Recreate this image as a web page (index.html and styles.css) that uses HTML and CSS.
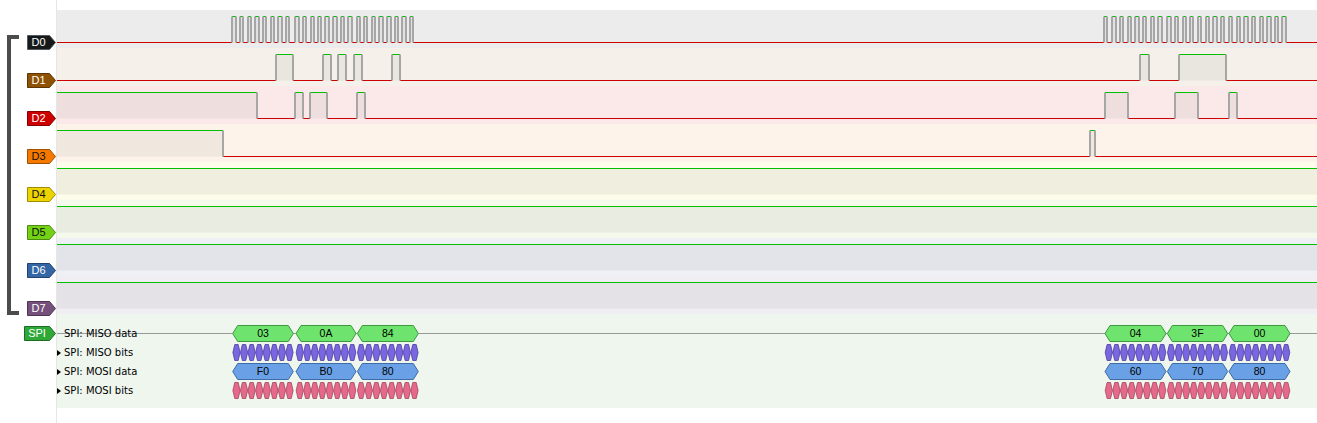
FILE: index.html
```html
<!DOCTYPE html>
<html>
<head>
<meta charset="utf-8">
<title>Logic analyzer</title>
<link rel="stylesheet" href="styles.css">
</head>
<body>
<div class="app">
  <div class="headers">
    <div class="bracket-col"><div class="bracket"></div></div>
    <div class="labels">
      <div class="hrow"><div class="tag"><svg width="29" height="15"><polygon points="0.5,0.5 22.5,0.5 28.5,7.5 22.5,14.5 0.5,14.5" fill="#16191a" stroke="#555a5c"/></svg><span class="lt">D0</span></div></div>
      <div class="hrow"><div class="tag"><svg width="29" height="15"><polygon points="0.5,0.5 22.5,0.5 28.5,7.5 22.5,14.5 0.5,14.5" fill="#8f5202" stroke="#5f3601"/></svg><span class="lt">D1</span></div></div>
      <div class="hrow"><div class="tag"><svg width="29" height="15"><polygon points="0.5,0.5 22.5,0.5 28.5,7.5 22.5,14.5 0.5,14.5" fill="#cc0000" stroke="#880000"/></svg><span class="lt">D2</span></div></div>
      <div class="hrow"><div class="tag"><svg width="29" height="15"><polygon points="0.5,0.5 22.5,0.5 28.5,7.5 22.5,14.5 0.5,14.5" fill="#f57900" stroke="#a35000"/></svg><span class="dk">D3</span></div></div>
      <div class="hrow"><div class="tag"><svg width="29" height="15"><polygon points="0.5,0.5 22.5,0.5 28.5,7.5 22.5,14.5 0.5,14.5" fill="#edd400" stroke="#9e8d00"/></svg><span class="dk">D4</span></div></div>
      <div class="hrow"><div class="tag"><svg width="29" height="15"><polygon points="0.5,0.5 22.5,0.5 28.5,7.5 22.5,14.5 0.5,14.5" fill="#73d216" stroke="#4d8c0f"/></svg><span class="dk">D5</span></div></div>
      <div class="hrow"><div class="tag"><svg width="29" height="15"><polygon points="0.5,0.5 22.5,0.5 28.5,7.5 22.5,14.5 0.5,14.5" fill="#3465a4" stroke="#22436d"/></svg><span class="lt">D6</span></div></div>
      <div class="hrow"><div class="tag"><svg width="29" height="15"><polygon points="0.5,0.5 22.5,0.5 28.5,7.5 22.5,14.5 0.5,14.5" fill="#75507b" stroke="#4e3552"/></svg><span class="lt">D7</span></div></div>
      <div class="hrow dec"><div class="tag wide"><svg width="32" height="15"><polygon points="0.5,0.5 25.5,0.5 31.5,7.5 25.5,14.5 0.5,14.5" fill="#2ea836" stroke="#1d6e22"/></svg><span class="lt">SPI</span></div></div>
    </div>
  </div>
  <div class="view">
    <div class="ruler"></div>
    <div class="trace t0"><svg class="wave" data-ch="d0" width="1260" height="38"></svg></div>
    <div class="trace t1"><svg class="wave" data-ch="d1" width="1260" height="38"></svg></div>
    <div class="trace t2"><svg class="wave" data-ch="d2" width="1260" height="38"></svg></div>
    <div class="trace t3"><svg class="wave" data-ch="d3" width="1260" height="38"></svg></div>
    <div class="trace t4"><svg class="wave" data-ch="d4" width="1260" height="38"></svg></div>
    <div class="trace t5"><svg class="wave" data-ch="d5" width="1260" height="38"></svg></div>
    <div class="trace t6"><svg class="wave" data-ch="d6" width="1260" height="38"></svg></div>
    <div class="trace t7"><svg class="wave" data-ch="d7" width="1260" height="38"></svg></div>
    <div class="decoder">
      <div class="drow"><svg class="ann" data-row="0" width="1260" height="19"></svg><div class="dtitle"><span class="tri hidden"></span>SPI: MISO data</div></div>
      <div class="drow"><svg class="ann" data-row="1" width="1260" height="19"></svg><div class="dtitle"><span class="tri"></span>SPI: MISO bits</div></div>
      <div class="drow"><svg class="ann" data-row="2" width="1260" height="19"></svg><div class="dtitle"><span class="tri"></span>SPI: MOSI data</div></div>
      <div class="drow"><svg class="ann" data-row="3" width="1260" height="19"></svg><div class="dtitle"><span class="tri"></span>SPI: MOSI bits</div></div>
    </div>
  </div>
</div>
<script src="script.js"></script>
</body>
</html>
```

FILE: styles.css
```css
* { box-sizing: border-box; }
body { margin: 0; background: #fff; font-family: "DejaVu Sans", "Noto Sans", sans-serif; }
.app { display: flex; width: 1317px; height: 423px; overflow: hidden; }

.headers { width: 57px; flex: none; display: flex; padding-top: 10px; border-right: 1px solid #e6e6e6; background: #fff; }
.bracket-col { width: 24px; flex: none; padding-left: 7px; }
.bracket { margin-top: 25px; width: 12px; height: 280px; border: 4px solid #4c4c4c; border-right: none; }
.labels { flex: 1; display: flex; flex-direction: column; }
.hrow { height: 38px; flex: none; }
.hrow .tag { margin-top: 25px; margin-left: 3px; }
.hrow.dec { height: auto; }
.hrow.dec .tag { margin-top: 12px; margin-left: 0; }
.tag { position: relative; width: 29px; height: 15px; display: flex; }
.tag.wide { width: 32px; }
.tag svg { position: absolute; left: 0; top: 0; display: block; }
.tag span { position: relative; width: 23px; text-align: center; font-family: "Liberation Sans", Arial, sans-serif; font-size: 11px; line-height: 15px; }
.tag.wide span { width: 26px; }
.tag .lt { color: #fff; }
.tag .dk { color: #111; }

.view { flex: 1; display: flex; flex-direction: column; }
.ruler { height: 10px; flex: none; background: #fff; }
.trace { height: 38px; flex: none; }
.trace svg { display: block; }
.t0 { background: #ececec; }
.t1 { background: #f5f1ea; }
.t2 { background: #fbe9e9; }
.t3 { background: #fdf3ea; }
.t4 { background: #fdfbea; }
.t5 { background: #f4f9ec; }
.t6 { background: #eef0f6; }
.t7 { background: #f1eef3; }

.decoder { flex: none; background: #eef6ee; padding: 10px 0 8px; }
.drow { position: relative; height: 19px; }
.drow svg { position: absolute; left: 0; top: 0; display: block; }
.dtitle { position: relative; display: flex; align-items: center; height: 19px; font-size: 10px; color: #000; white-space: nowrap; }
.tri { width: 0; height: 0; border-left: 4px solid #000; border-top: 3.5px solid transparent; border-bottom: 3.5px solid transparent; margin-right: 3px; }
.tri.hidden { visibility: hidden; }
.ann text { font-family: "Liberation Sans", Arial, sans-serif; font-size: 10.5px; fill: #000; }
```

FILE: script.js
```js
(function () {
  var NS = 'http://www.w3.org/2000/svg';
  var X0 = 57, W = 1260, HI = 6.5, LO = 32.5;

  function el(tag, attrs, parent) {
    var e = document.createElementNS(NS, tag);
    for (var k in attrs) e.setAttribute(k, attrs[k]);
    if (parent) parent.appendChild(e);
    return e;
  }

  var g1 = [232.3,240,248,255.3,263,270.7,278.3,286,295.3,303,310.7,318,325.3,333.3,340.7,348.3,356.7,364,372,379.3,387.3,394.7,402.3,410];
  var g2 = [1104,1112.3,1120,1127.7,1135.3,1143,1150.7,1158.3,1167.3,1175,1182.7,1190,1198,1205.7,1213.3,1221,1229,1236.7,1244.3,1252,1259.7,1267.3,1275,1282.3];
  var clk = g1.concat(g2).map(function (e) { return [e, e + 3.4]; });
  var full = [[57, 1317]];
  var traces = {
    d0: clk,
    d1: [[276.3,292.7],[322.7,330.7],[338.3,346],[354.3,362.3],[392.3,400.3],[1140.3,1148.7],[1179.3,1226.3]],
    d2: [[57,256.7],[295.3,303.3],[310.3,326.7],[357.3,365.3],[1105.3,1128],[1174.7,1198],[1228.7,1236.7]],
    d3: [[57,223.3],[1090.3,1095.3]],
    d4: full, d5: full, d6: full, d7: full
  };

  document.querySelectorAll('svg.wave').forEach(function (svg) {
    var highs = traces[svg.getAttribute('data-ch')];
    var fill = '', green = '', red = '', edges = '';
    var cur = 0;
    highs.forEach(function (h) {
      var xa = Math.max(0, Math.round(h[0] - X0));
      var xb = Math.min(W, Math.round(h[1] - X0));
      if (xa > cur) red += 'M' + cur + ' ' + LO + 'H' + xa;
      fill += 'M' + xa + ' ' + HI + 'H' + xb + 'V' + LO + 'H' + xa + 'Z';
      green += 'M' + xa + ' ' + HI + 'H' + xb;
      if (xa > 0) edges += 'M' + xa + ' ' + HI + 'V' + LO;
      if (xb < W) edges += 'M' + xb + ' ' + HI + 'V' + LO;
      cur = xb;
    });
    if (cur < W) red += 'M' + cur + ' ' + LO + 'H' + W;
    el('path', { d: fill, fill: 'rgba(128,128,128,0.1)' }, svg);
    if (red) el('path', { d: red, stroke: '#cc0000', 'stroke-width': 1, fill: 'none' }, svg);
    if (green) el('path', { d: green, stroke: '#00c000', 'stroke-width': 1, fill: 'none' }, svg);
    if (edges) el('path', { d: edges, stroke: '#a6a6a6', 'stroke-width': 2, fill: 'none' }, svg);
  });

  var bytes = [[232.7,293.3],[296,356],[357.3,418.3],[1105,1166],[1167.3,1227.7],[1229,1290]];
  var rows = [
    { kind: 'data', vals: ['03','0A','84','04','3F','00'], fill: '#6ee46e', stroke: '#3e983e' },
    { kind: 'bits', fill: '#7a66e0', stroke: '#4a3c9c' },
    { kind: 'data', vals: ['F0','B0','80','60','70','80'], fill: '#6aa0e5', stroke: '#3f6ba6' },
    { kind: 'bits', fill: '#e6698b', stroke: '#a1445d' }
  ];
  var T = 1.5, B = 17.5, C = 9.5;
  function hex(s, e, cap) {
    return [s, C, s + cap, T, e - cap, T, e, C, e - cap, B, s + cap, B].map(function (v) { return +v.toFixed(2); }).join(' ');
  }

  document.querySelectorAll('svg.ann').forEach(function (svg) {
    var idx = +svg.getAttribute('data-row');
    var r = rows[idx];
    if (idx === 0) el('path', { d: 'M0 9.5H' + W, stroke: '#999999', 'stroke-width': 1 }, svg);
    bytes.forEach(function (b, i) {
      var s = b[0] - X0, e = b[1] - X0;
      if (r.kind === 'data') {
        el('polygon', { points: hex(s, e, 5), fill: r.fill, stroke: r.stroke, 'stroke-width': 1 }, svg);
        var t = el('text', { x: (s + e) / 2, y: C + 0.5, 'text-anchor': 'middle', 'dominant-baseline': 'middle' }, svg);
        t.textContent = r.vals[i];
      } else {
        var w = (e - s) / 8;
        for (var k = 0; k < 8; k++) {
          var bs = s + k * w, be = bs + w;
          el('polygon', { points: hex(bs + 0.2, be - 0.2, w / 4), fill: r.fill, stroke: r.stroke, 'stroke-width': 0.8 }, svg);
        }
      }
    });
  });
})();
```
